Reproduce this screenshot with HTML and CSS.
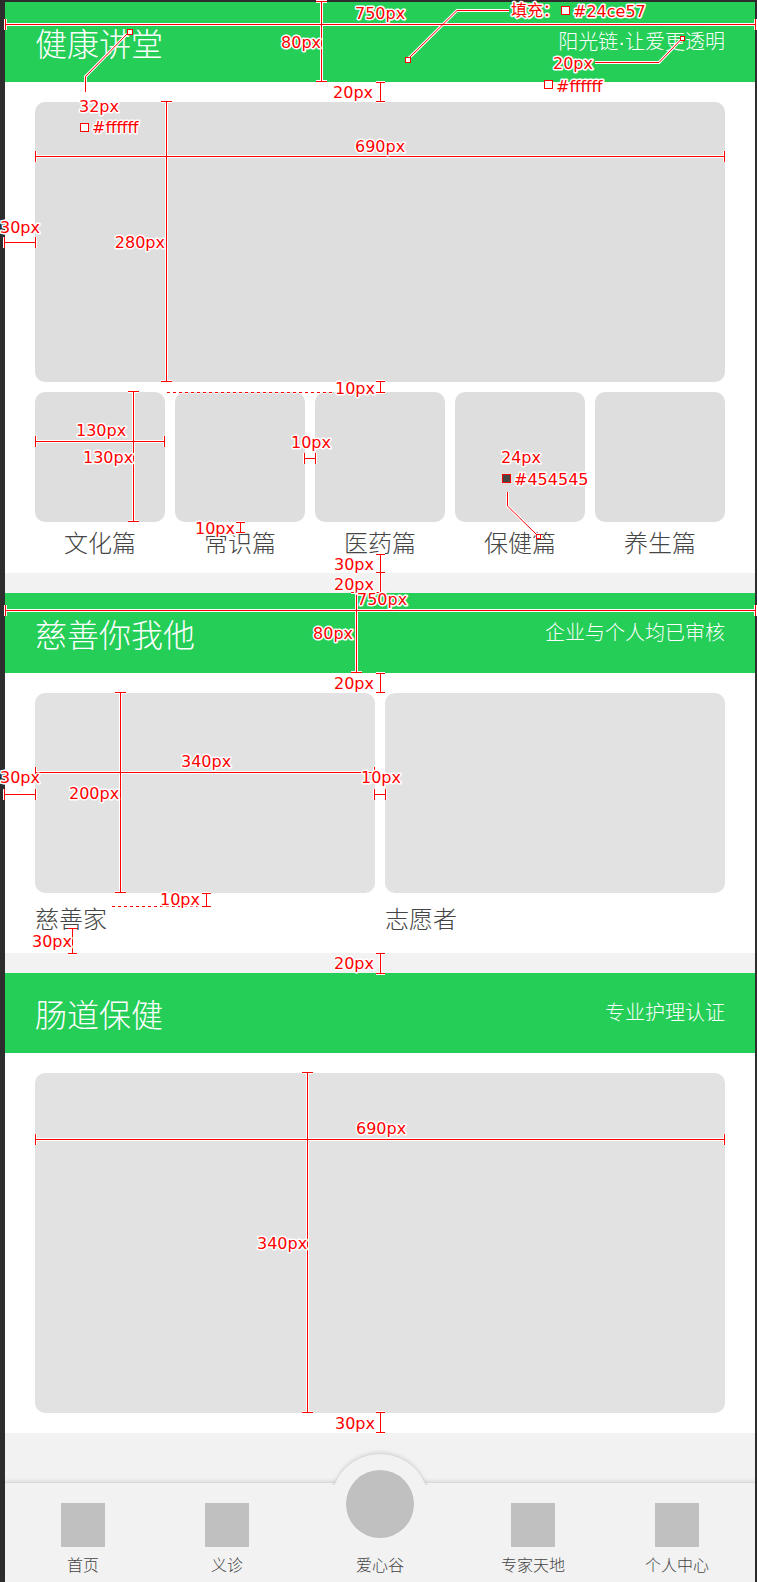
FILE: index.html
```html
<!DOCTYPE html>
<html lang="zh-CN">
<head>
<meta charset="utf-8">
<title>健康讲堂</title>
<link rel="stylesheet" href="styles.css">
</head>
<body>
<div class="page">
  <section class="section">
    <header class="bar">
      <h2 class="bar-title">健康讲堂</h2>
      <span class="bar-sub">阳光链·让爱更透明</span>
    </header>
    <div class="body1">
      <div class="hero"></div>
      <div class="cats">
        <div class="cat"><div class="cat-img"></div><div class="cat-name">文化篇</div></div>
        <div class="cat"><div class="cat-img"></div><div class="cat-name">常识篇</div></div>
        <div class="cat"><div class="cat-img"></div><div class="cat-name">医药篇</div></div>
        <div class="cat"><div class="cat-img"></div><div class="cat-name">保健篇</div></div>
        <div class="cat"><div class="cat-img"></div><div class="cat-name">养生篇</div></div>
      </div>
    </div>
  </section>

  <section class="section">
    <header class="bar">
      <h2 class="bar-title">慈善你我他</h2>
      <span class="bar-sub">企业与个人均已审核</span>
    </header>
    <div class="body2">
      <div class="duo"><div class="duo-img"></div><div class="duo-name">慈善家</div></div>
      <div class="duo"><div class="duo-img"></div><div class="duo-name">志愿者</div></div>
    </div>
  </section>

  <section class="section">
    <header class="bar">
      <h2 class="bar-title">肠道保健</h2>
      <span class="bar-sub">专业护理认证</span>
    </header>
    <div class="body3">
      <div class="banner"></div>
    </div>
  </section>

  <nav class="tabbar">
    <div class="bump"><div class="bump-circle"></div></div>
    <div class="tab"><div class="tab-icon"></div><div class="tab-label">首页</div></div>
    <div class="tab"><div class="tab-icon"></div><div class="tab-label">义诊</div></div>
    <div class="tab"><div class="tab-ball"></div><div class="tab-label">爱心谷</div></div>
    <div class="tab"><div class="tab-icon"></div><div class="tab-label">专家天地</div></div>
    <div class="tab"><div class="tab-icon"></div><div class="tab-label">个人中心</div></div>
  </nav>
</div>

<svg class="notes" width="757" height="1582" viewBox="0 0 757 1582" xmlns="http://www.w3.org/2000/svg">
  <defs>
    <path id="dims" fill="none" d="
      M5.5 24.5H755.5 M5.5 19V30 M755.5 19V30
      M321.5 1.5V81.5 M316 1.5H327 M316 81.5H327
      M380.5 82.5V101.5 M376 82.5H385 M376 101.5H385
      M127 34L85.5 76.5V92
      M408 59L457 10.5H509
      M595 62.5H659L680.5 40
      M35.5 156.5H724.5 M35.5 151V162 M724.5 151V162
      M166.5 101.5V381.5 M161 101.5H172 M161 381.5H172
      M4.5 242.5H35.5 M4.5 237V248 M35.5 237V248
      M380.5 381.5V392.5 M376 381.5H385 M376 392.5H385
      M35.5 441.5H164.5 M35.5 436V447 M164.5 436V447
      M133.5 391.5V521.5 M128 391.5H139 M128 521.5H139
      M304.5 458.5H315.5 M304.5 453V464 M315.5 453V464
      M240.5 522.5V532.5 M236 522.5H245 M236 532.5H245
      M507.5 492V506L537 535
      M380.5 554.5V592.5 M376 554.5H385 M376 572.5H385 M376 592.5H385
      M5.5 610.5H755.5 M5.5 605V616 M755.5 605V616
      M356.5 592.5V672.5 M351 592.5H362 M351 672.5H362
      M380.5 673.5V692.5 M376 673.5H385 M376 692.5H385
      M35.5 772.5H374.5 M35.5 767V778 M374.5 767V778
      M120.5 692.5V892.5 M115 692.5H126 M115 892.5H126
      M4.5 794.5H35.5 M4.5 789V800 M35.5 789V800
      M374.5 794.5H385.5 M374.5 789V800 M385.5 789V800
      M206.5 893.5V906.5 M202 893.5H211 M202 906.5H211
      M72.5 928.5V953.5 M68 928.5H77 M68 953.5H77
      M380.5 953.5V973.5 M376 953.5H385 M376 973.5H385
      M35.5 1139.5H724.5 M35.5 1134V1145 M724.5 1134V1145
      M307.5 1072.5V1412.5 M302 1072.5H313 M302 1412.5H313
      M380.5 1412.5V1432.5 M376 1412.5H385 M376 1432.5H385"/>
    <path id="dots" fill="none" d="M167 392.5H333 M112 906.5H198"/>
  </defs>
  <use href="#dims" class="halo"/>
  <use href="#dims" class="ink"/>
  <use href="#dots" class="halo dash"/>
  <use href="#dots" class="ink dash"/>

  <rect class="pin" x="127.5" y="29.5" width="5" height="5"/>
  <rect class="pin" x="405.5" y="57.5" width="5" height="5"/>
  <rect class="pin" x="680.5" y="36.5" width="4" height="4"/>
  <rect class="pin" x="536.5" y="534.5" width="4" height="4"/>
  <rect class="swatch" x="80.5" y="123.5" width="8" height="8"/>
  <rect class="swatch" x="561.5" y="6.5" width="8" height="8"/>
  <rect class="swatch" x="544.5" y="80.5" width="8" height="8"/>
  <rect class="swatch dark" x="502.5" y="474.5" width="8" height="8"/>

  <text class="note" x="355" y="19">750px</text>
  <text class="note end" x="321" y="48">80px</text>
  <text class="note end" x="373" y="98">20px</text>
  <text class="note" x="79" y="112">32px</text>
  <text class="note" x="92" y="133">#ffffff</text>
  <text class="note" x="511" y="16">填充：</text>
  <text class="note" x="573" y="17">#24ce57</text>
  <text class="note" x="553" y="69">20px</text>
  <text class="note" x="556" y="92">#ffffff</text>
  <text class="note" x="355" y="152">690px</text>
  <text class="note end" x="165" y="248">280px</text>
  <text class="note" x="0" y="233">30px</text>
  <text class="note" x="335" y="394">10px</text>
  <text class="note" x="76" y="436">130px</text>
  <text class="note" x="83" y="463">130px</text>
  <text class="note" x="291" y="448">10px</text>
  <text class="note" x="195" y="534">10px</text>
  <text class="note" x="501" y="463">24px</text>
  <text class="note" x="514" y="485">#454545</text>
  <text class="note" x="334" y="570">30px</text>
  <text class="note" x="334" y="590">20px</text>
  <text class="note" x="357" y="605">750px</text>
  <text class="note end" x="353" y="639">80px</text>
  <text class="note" x="334" y="689">20px</text>
  <text class="note" x="181" y="767">340px</text>
  <text class="note" x="69" y="799">200px</text>
  <text class="note" x="0" y="783">30px</text>
  <text class="note" x="361" y="783">10px</text>
  <text class="note" x="160" y="905">10px</text>
  <text class="note" x="32" y="947">30px</text>
  <text class="note" x="334" y="969">20px</text>
  <text class="note" x="356" y="1134">690px</text>
  <text class="note" x="257" y="1249">340px</text>
  <text class="note" x="335" y="1429">30px</text>
</svg>
</body>
</html>
```

FILE: styles.css
```css
* {
  box-sizing: border-box;
}

html, body {
  margin: 0;
}

body {
  position: relative;
  width: 757px;
  height: 1582px;
  padding: 2px 0 0 5px;
  background: #2d2d2d;
  overflow: hidden;
  font-family: "Noto Sans CJK SC", "Noto Sans", sans-serif;
}

.page {
  width: 750px;
  height: 1580px;
  background: #f2f2f2;
  display: flex;
  flex-direction: column;
}

.section {
  background: #ffffff;
}

.section + .section {
  margin-top: 20px;
}

.bar {
  height: 80px;
  padding: 0 30px;
  background: #24ce57;
  color: #ffffff;
  display: flex;
  align-items: center;
  justify-content: space-between;
}

.bar-title {
  margin: 0;
  font-size: 32px;
  font-weight: 300;
  line-height: 1;
}

.bar-sub {
  font-family: "Liberation Sans", "Noto Sans CJK SC", sans-serif;
  font-size: 20px;
  font-weight: 300;
  line-height: 1;
}

.body1 {
  padding: 20px 30px 19px;
}

.hero {
  height: 280px;
  border-radius: 10px;
  background: #dedede;
}

.cats {
  margin-top: 10px;
  display: flex;
  gap: 10px;
}

.cat {
  width: 130px;
}

.cat-img {
  height: 130px;
  border-radius: 10px;
  background: #dedede;
}

.cat-name {
  margin-top: 8px;
  font-size: 24px;
  font-weight: 300;
  line-height: 24px;
  color: #454545;
  text-align: center;
}

.body2 {
  padding: 20px 30px 23px;
  display: flex;
  gap: 10px;
}

.duo {
  width: 340px;
}

.duo-img {
  height: 200px;
  border-radius: 10px;
  background: #e2e2e2;
}

.duo-name {
  margin-top: 13px;
  font-size: 24px;
  font-weight: 300;
  line-height: 24px;
  color: #454545;
}

.body3 {
  padding: 20px 30px;
}

.banner {
  height: 340px;
  border-radius: 10px;
  background: #e2e2e2;
}

.tabbar {
  position: relative;
  margin-top: auto;
  height: 100px;
  background: #f2f2f2;
  border-top: 1px solid #d9d9d9;
  box-shadow: 0 -2px 3px rgba(0, 0, 0, 0.07);
  display: grid;
  grid-template-columns: 156px 132px 174px 132px 156px;
}

.bump {
  position: absolute;
  left: 50%;
  top: -34px;
  width: 108px;
  height: 36px;
  margin-left: -54px;
  overflow: hidden;
  z-index: 1;
}

.bump-circle {
  width: 100px;
  height: 100px;
  margin: 4px;
  border-radius: 50%;
  background: #f2f2f2;
  border: 1px solid #d9d9d9;
  box-shadow: 0 -2px 3px rgba(0, 0, 0, 0.07);
}

.tab {
  display: flex;
  flex-direction: column;
  align-items: center;
}

.tab-icon {
  width: 44px;
  height: 44px;
  margin-top: 20px;
  background: #c0c0c0;
}

.tab-ball {
  position: relative;
  z-index: 2;
  width: 68px;
  height: 68px;
  margin-top: -13px;
  border-radius: 50%;
  background: #c0c0c0;
}

.tab-label {
  margin-top: 7px;
  font-size: 16px;
  font-weight: 300;
  line-height: 20px;
  color: #454545;
}

.tab-ball + .tab-label {
  margin-top: 16px;
}

.notes {
  position: absolute;
  left: 0;
  top: 0;
  z-index: 10;
  pointer-events: none;
}

.halo {
  stroke: #ffffff;
  stroke-width: 3;
}

.ink {
  stroke: #ff0000;
  stroke-width: 1;
}

.dash {
  stroke-dasharray: 3 3;
}

.pin {
  fill: #ffffff;
  stroke: #ff0000;
  stroke-width: 1;
}

.swatch {
  fill: #ffffff;
  stroke: #ff0000;
  stroke-width: 1;
}

.swatch.dark {
  fill: #454545;
}

.note {
  font-family: "DejaVu Sans", "Noto Sans CJK SC", sans-serif;
  font-size: 16px;
  fill: #ff0000;
  stroke: #ffffff;
  stroke-width: 3;
  stroke-linejoin: round;
  paint-order: stroke;
}

.note.end {
  text-anchor: end;
}
```
